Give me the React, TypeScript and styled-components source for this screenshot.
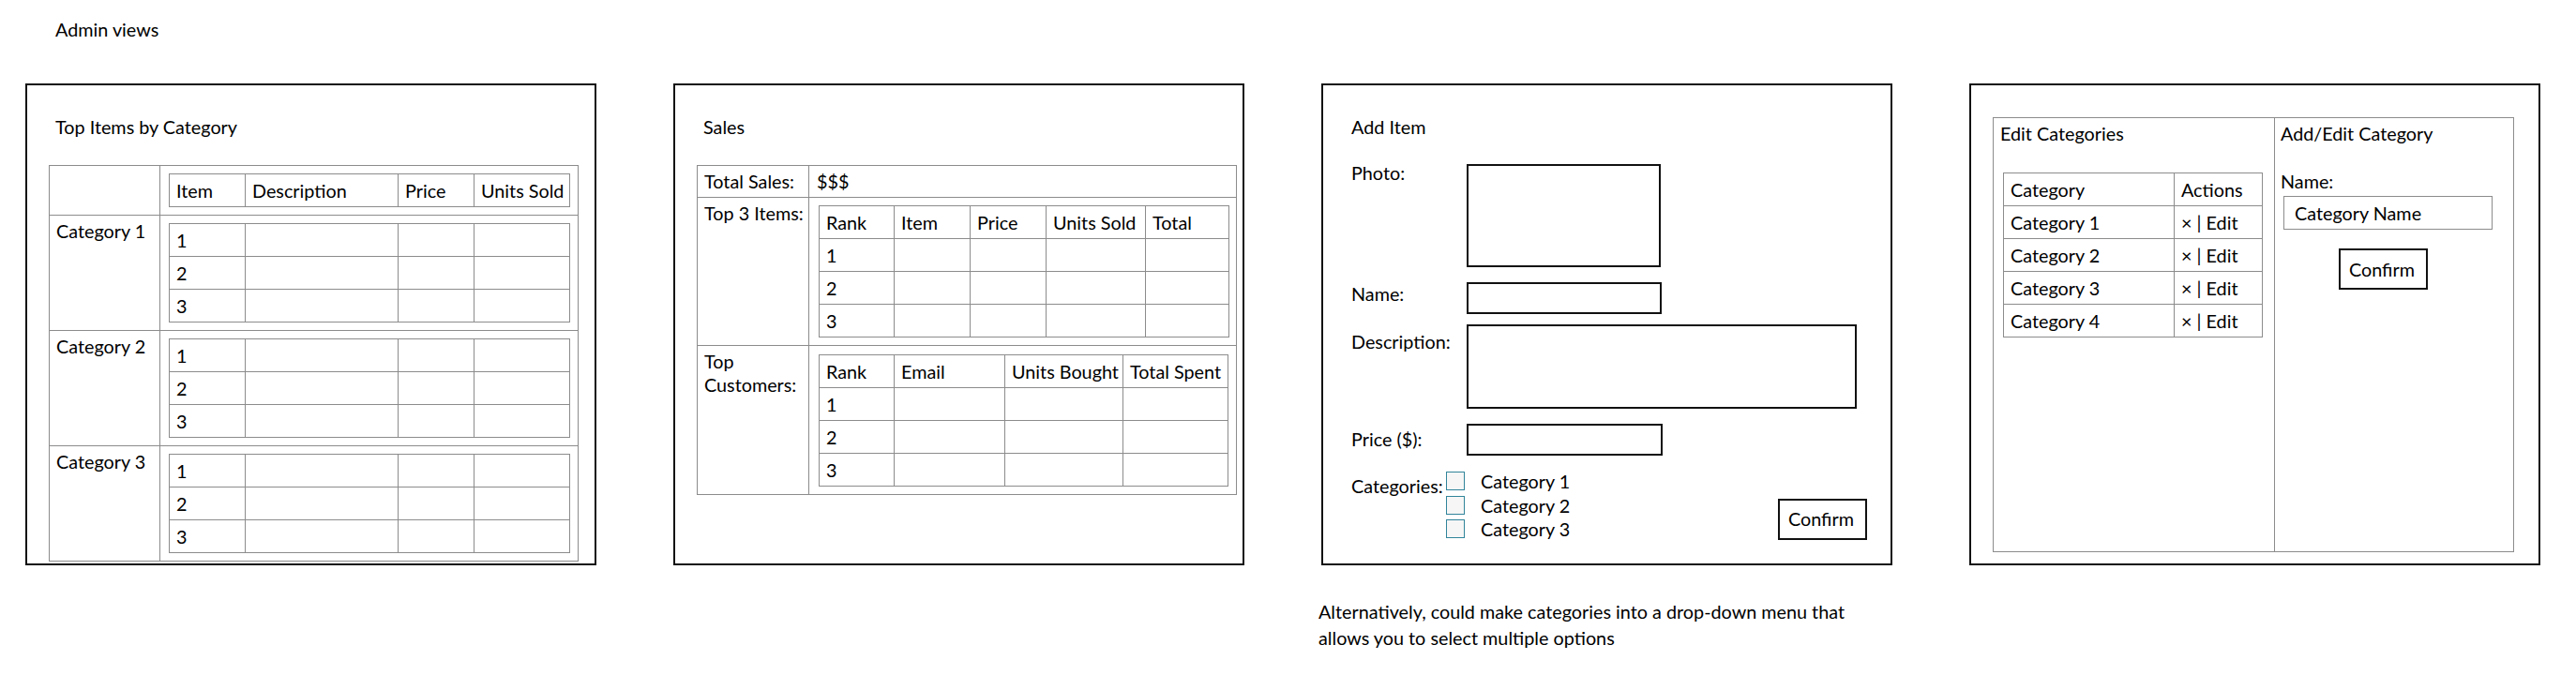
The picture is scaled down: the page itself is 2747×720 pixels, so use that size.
import styled, { createGlobalStyle } from "styled-components";

const LINE = "#8c8c8c";
const INK = "#111";

const GlobalStyle = createGlobalStyle`
  html, body {
    margin: 0;
    padding: 0;
    background: #fff;
  }
  body {
    font-family: Lato, "Liberation Sans", sans-serif;
    font-size: 19.8px;
    line-height: 25px;
    color: #000;
  }
`;

const topItemCols = [81, 163, 81, 102];
const topItemHeads = ["Item", "Description", "Price", "Units Sold"];
const salesItemCols = [80, 81, 81, 106, 89];
const salesItemHeads = ["Rank", "Item", "Price", "Units Sold", "Total"];
const customerCols = [80, 118, 126, 112];
const customerHeads = ["Rank", "Email", "Units Bought", "Total Spent"];
const ranks = ["1", "2", "3"];

// form rows of the Add Item panel, label offset is how far the label sits below the box top
const itemFields = [
  { label: "Photo:", w: 207, h: 110, offset: -3, gap: 0 },
  { label: "Name:", w: 208, h: 34, offset: 0, gap: 16 },
  { label: "Description:", w: 416, h: 90, offset: 6, gap: 11 },
  { label: "Price ($):", w: 209, h: 34, offset: 4, gap: 16 },
];

const editCategories = ["Category 1", "Category 2", "Category 3", "Category 4"];

function GridTable({
  cols,
  heads,
  rows,
}: {
  cols: number[];
  heads?: string[];
  rows: string[];
}) {
  const width = cols.reduce((a, b) => a + b, 0);
  return (
    <Grid $w={width}>
      <colgroup>
        {cols.map((c, i) => (
          <col key={i} style={{ width: c }} />
        ))}
      </colgroup>
      <tbody>
        {heads && (
          <GridRow>
            {heads.map((h) => (
              <GridCell key={h}>{h}</GridCell>
            ))}
          </GridRow>
        )}
        {rows.map((r) => (
          <GridRow key={r}>
            {cols.map((_, i) => (
              <GridCell key={i}>{i === 0 ? r : ""}</GridCell>
            ))}
          </GridRow>
        ))}
      </tbody>
    </Grid>
  );
}

function TopItemsPanel() {
  return (
    <Panel>
      <PanelTitle>Top Items by Category</PanelTitle>
      <OuterTable $w={564}>
        <colgroup>
          <col style={{ width: 118 }} />
          <col style={{ width: 446 }} />
        </colgroup>
        <tbody>
          <tr>
            <SideCell />
            <NestCell $pl={9} $pr={9}>
              <GridTable cols={topItemCols} heads={topItemHeads} rows={[]} />
            </NestCell>
          </tr>
          {["Category 1", "Category 2", "Category 3"].map((c) => (
            <tr key={c}>
              <SideCell>{c}</SideCell>
              <NestCell $pl={9} $pr={9}>
                <GridTable cols={topItemCols} rows={ranks} />
              </NestCell>
            </tr>
          ))}
        </tbody>
      </OuterTable>
    </Panel>
  );
}

function SalesPanel() {
  return (
    <Panel>
      <PanelTitle>Sales</PanelTitle>
      <OuterTable $w={575}>
        <colgroup>
          <col style={{ width: 119 }} />
          <col style={{ width: 456 }} />
        </colgroup>
        <tbody>
          <tr>
            <SideCell>Total Sales:</SideCell>
            <ValueCell>$$$</ValueCell>
          </tr>
          <tr>
            <SideCell>Top 3 Items:</SideCell>
            <NestCell $pl={10} $pr={8}>
              <GridTable cols={salesItemCols} heads={salesItemHeads} rows={ranks} />
            </NestCell>
          </tr>
          <tr>
            <SideCell>
              Top
              <br />
              Customers:
            </SideCell>
            <NestCell $pl={10} $pr={8} $pt={9}>
              <GridTable cols={customerCols} heads={customerHeads} rows={ranks} />
            </NestCell>
          </tr>
        </tbody>
      </OuterTable>
    </Panel>
  );
}

function AddItemPanel() {
  return (
    <Panel>
      <PanelTitle>Add Item</PanelTitle>
      <ItemForm>
        {itemFields.map((f) => (
          <FieldRow key={f.label} $gap={f.gap}>
            <FieldLabel $offset={f.offset}>{f.label}</FieldLabel>
            <FieldBox $w={f.w} $h={f.h} />
          </FieldRow>
        ))}
        <CategoriesRow>
          <CategoriesGroup>
            <CategoriesLabel>Categories:</CategoriesLabel>
            <CheckList>
              {["Category 1", "Category 2", "Category 3"].map((c) => (
                <CheckItem key={c}>
                  <CheckBox />
                  {c}
                </CheckItem>
              ))}
            </CheckList>
          </CategoriesGroup>
          <ItemConfirm>Confirm</ItemConfirm>
        </CategoriesRow>
      </ItemForm>
    </Panel>
  );
}

function EditCategoriesPanel() {
  return (
    <Panel>
      <Frame>
        <FrameSection $divider>
          <div>Edit Categories</div>
          <CategoryTable>
            <colgroup>
              <col style={{ width: 182 }} />
              <col style={{ width: 94 }} />
            </colgroup>
            <tbody>
              <GridRow>
                <GridCell>Category</GridCell>
                <GridCell>Actions</GridCell>
              </GridRow>
              {editCategories.map((c) => (
                <GridRow key={c}>
                  <GridCell>{c}</GridCell>
                  <GridCell>× | Edit</GridCell>
                </GridRow>
              ))}
            </tbody>
          </CategoryTable>
        </FrameSection>
        <FrameSection>
          <div>Add/Edit Category</div>
          <NameLabel>Name:</NameLabel>
          <NameInput>Category Name</NameInput>
          <CategoryConfirm>Confirm</CategoryConfirm>
        </FrameSection>
      </Frame>
    </Panel>
  );
}

export default function App() {
  return (
    <>
      <GlobalStyle />
      <Page>
        <PageTitle>Admin views</PageTitle>
        <PanelRow>
          <TopItemsPanel />
          <SalesPanel />
          <Column>
            <AddItemPanel />
            <Note>
              Alternatively, could make categories into a drop-down menu that
              <br />
              allows you to select multiple options
            </Note>
          </Column>
          <EditCategoriesPanel />
        </PanelRow>
      </Page>
    </>
  );
}

const Page = styled.div`
  padding: 19px 0 0 27px;
`;

const PageTitle = styled.div`
  margin-left: 32px;
`;

const PanelRow = styled.div`
  display: flex;
  align-items: flex-start;
  gap: 82px;
  margin-top: 45px;
`;

const Column = styled.div`
  display: flex;
  flex-direction: column;
`;

const Panel = styled.section`
  width: 609px;
  height: 514px;
  box-sizing: border-box;
  border: 2px solid ${INK};
  padding: 32px 0 0 23px;
`;

const PanelTitle = styled.div`
  margin-left: 7px;
`;

const OuterTable = styled.table<{ $w: number }>`
  width: ${(p) => p.$w}px;
  margin-top: 28px;
  border-collapse: collapse;
  table-layout: fixed;
`;

const SideCell = styled.td`
  border: 1px solid ${LINE};
  padding: 4px 7px;
  vertical-align: top;
  white-space: nowrap;
`;

const ValueCell = styled.td`
  border: 1px solid ${LINE};
  padding: 4px 8px;
  vertical-align: top;
`;

const NestCell = styled.td<{ $pl: number; $pr: number; $pt?: number }>`
  border: 1px solid ${LINE};
  padding: ${(p) => p.$pt ?? 8}px ${(p) => p.$pr}px 8px ${(p) => p.$pl}px;
  vertical-align: top;
`;

const Grid = styled.table<{ $w: number }>`
  width: ${(p) => p.$w}px;
  border-collapse: collapse;
  table-layout: fixed;
`;

const GridRow = styled.tr`
  height: 35px;
`;

const GridCell = styled.td`
  border: 1px solid ${LINE};
  padding: 0 7px;
  vertical-align: middle;
  white-space: nowrap;
  overflow: hidden;
`;

const ItemForm = styled.div`
  display: flex;
  flex-direction: column;
  margin: 27px 25px 0 7px;
`;

const FieldRow = styled.div<{ $gap: number }>`
  display: flex;
  align-items: flex-start;
  margin-top: ${(p) => p.$gap}px;
`;

const FieldLabel = styled.div<{ $offset: number }>`
  width: 123px;
  flex-shrink: 0;
  margin-top: ${(p) => p.$offset}px;
`;

const FieldBox = styled.div<{ $w: number; $h: number }>`
  width: ${(p) => p.$w}px;
  height: ${(p) => p.$h}px;
  box-sizing: border-box;
  border: 2px solid ${INK};
`;

const CategoriesRow = styled.div`
  display: flex;
  justify-content: space-between;
  align-items: flex-end;
  margin-top: 15px;
`;

const CategoriesGroup = styled.div`
  display: flex;
  align-items: flex-start;
`;

const CategoriesLabel = styled.div`
  width: 101px;
  margin-top: 5px;
  white-space: nowrap;
`;

const CheckList = styled.div`
  display: flex;
  flex-direction: column;
`;

const CheckItem = styled.div`
  display: flex;
  align-items: flex-start;
  gap: 17px;
  height: 25.5px;
`;

const CheckBox = styled.span`
  display: block;
  width: 20px;
  height: 20px;
  margin-top: 2px;
  box-sizing: border-box;
  border: 1px solid #31849b;
  background: #f6f6f6;
  flex-shrink: 0;
`;

const ConfirmButton = styled.button`
  width: 95px;
  height: 44px;
  box-sizing: border-box;
  padding: 0 0 0 9px;
  border: 2px solid ${INK};
  background: #fff;
  font: inherit;
  color: #000;
  text-align: left;
`;

const ItemConfirm = styled(ConfirmButton)`
  margin-bottom: 2px;
`;

const CategoryConfirm = styled(ConfirmButton)`
  display: block;
  margin: 20px 0 0 62px;
`;

const Frame = styled.div`
  display: grid;
  grid-template-columns: 300px 1fr;
  width: 556px;
  height: 464px;
  margin-top: 2px;
  box-sizing: border-box;
  border: 1px solid ${LINE};
`;

const FrameSection = styled.div<{ $divider?: boolean }>`
  padding: 4px 0 0 ${(p) => (p.$divider ? 7 : 6)}px;
  border-right: ${(p) => (p.$divider ? `1px solid ${LINE}` : "none")};
`;

const CategoryTable = styled.table`
  width: 276px;
  margin: 29px 0 0 3px;
  border-collapse: collapse;
  table-layout: fixed;
`;

const NameLabel = styled.div`
  margin-top: 26px;
`;

const NameInput = styled.div`
  display: flex;
  align-items: center;
  width: 223px;
  height: 36px;
  margin: 3px 0 0 3px;
  padding: 0 11px;
  box-sizing: border-box;
  border: 1px solid ${LINE};
`;

const Note = styled.p`
  margin: 35px 0 0 -3px;
  line-height: 28px;
  white-space: nowrap;
`;
